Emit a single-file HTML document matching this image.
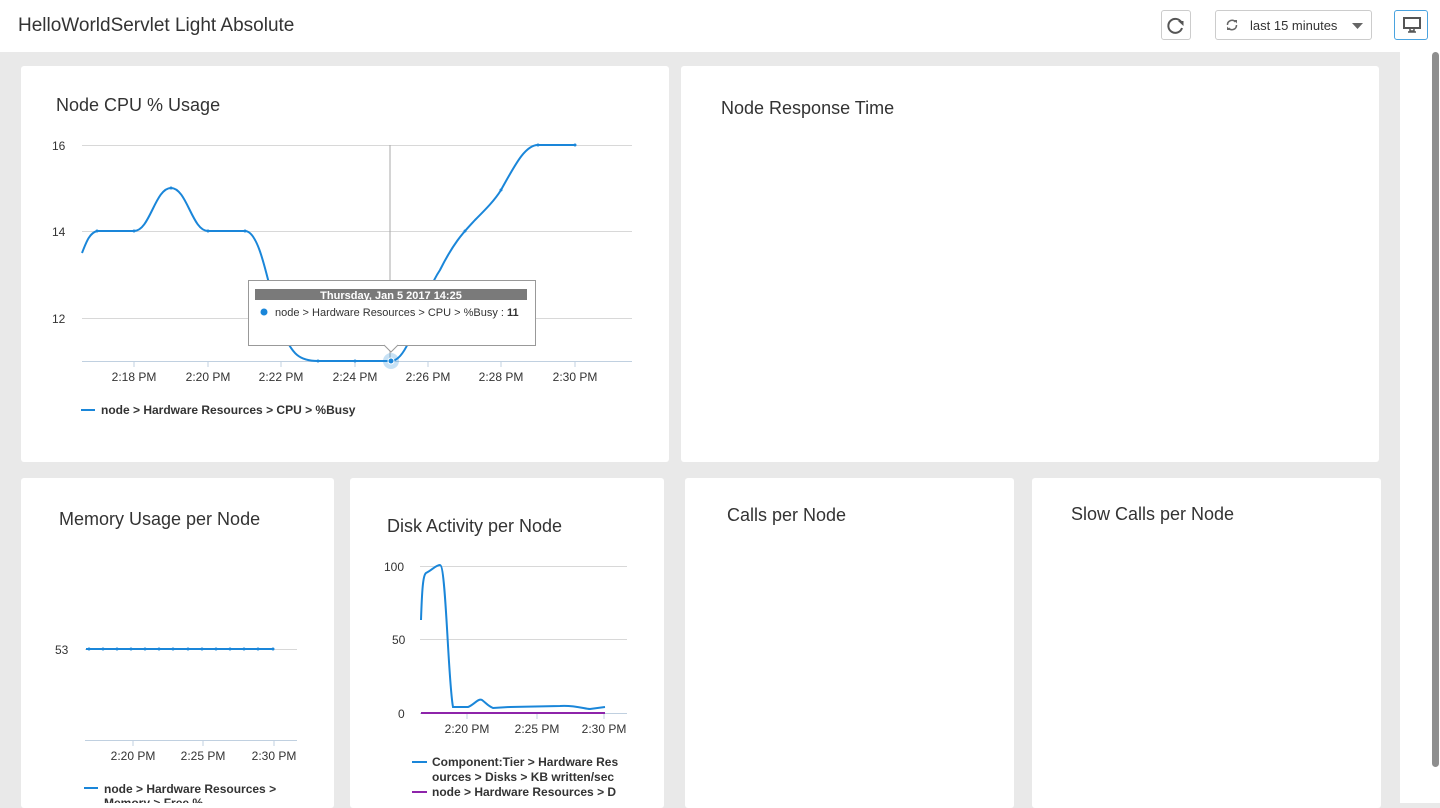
<!DOCTYPE html>
<html><head><meta charset="utf-8"><style>
body{margin:0;width:1440px;height:803px;overflow:hidden;background:#e9e9e9;font-family:"Liberation Sans",sans-serif;position:relative}
.hdr{position:absolute;left:0;top:0;width:1440px;height:52px;background:#fff}
.title{position:absolute;left:18px;top:15px;font-size:19px;color:#333}
.btn{position:absolute;border:1px solid #ccc;border-radius:3px;background:#fff;box-sizing:border-box}
.card{position:absolute;background:#fff;border-radius:3px}
.ct{position:absolute;font-size:18px;color:#333}
svg text{font-family:"Liberation Sans",sans-serif}
.sb{position:absolute;left:1400px;top:52px;width:40px;height:751px;background:#fff}
</style></head><body>
<div class="hdr">
<div class="title">HelloWorldServlet Light Absolute</div>
<div class="btn" style="left:1161px;top:10px;width:30px;height:30px">
<svg width="28" height="28" viewBox="0 0 28 28"><path d="M19.5 11.5 A7 7 0 1 0 20 17" fill="none" stroke="#555" stroke-width="2"/><path d="M16 10 L21.5 10 L21.5 15 Z" fill="#555"/></svg></div>
<div class="btn" style="left:1215px;top:10px;width:157px;height:30px">
<svg style="position:absolute;left:9px;top:7px" width="14" height="14" viewBox="0 0 14 14"><path d="M2.5 7 A4.5 4.5 0 0 1 10.5 4" fill="none" stroke="#666" stroke-width="1.5"/><path d="M11.5 7 A4.5 4.5 0 0 1 3.5 10" fill="none" stroke="#666" stroke-width="1.5"/><path d="M9 2 L12 2 L12 5.5Z M5 12 L2 12 L2 8.5Z" fill="#666"/></svg>
<span style="position:absolute;left:34px;top:7px;font-size:13px;color:#333">last 15 minutes</span>
<svg style="position:absolute;left:136px;top:12px" width="11" height="6"><path d="M0 0H11L5.5 6Z" fill="#666"/></svg></div>
<div class="btn" style="left:1394px;top:10px;width:34px;height:30px;border-color:#4aa3df">
<svg style="position:absolute;left:8px;top:6px" width="18" height="16" viewBox="0 0 18 16"><rect x="1" y="1" width="16" height="10" fill="none" stroke="#555" stroke-width="2"/><path d="M7 11v3h4v-3M5 15h8" stroke="#555" stroke-width="1.5" fill="none"/></svg></div>
</div>
<div class="sb"><div style="position:absolute;left:32px;top:0;width:7px;height:715px;background:#8e8e8e;border-radius:4px"></div></div>

<div class="card" style="left:21px;top:66px;width:648px;height:396px"></div>
<div class="card" style="left:681px;top:66px;width:698px;height:396px"></div>
<div class="card" style="left:21px;top:478px;width:313px;height:330px"></div>
<div class="card" style="left:350px;top:478px;width:314px;height:330px"></div>
<div class="card" style="left:685px;top:478px;width:329px;height:330px"></div>
<div class="card" style="left:1032px;top:478px;width:349px;height:330px"></div>

<div class="ct" style="left:56px;top:95px">Node CPU % Usage</div>
<div class="ct" style="left:721px;top:98px">Node Response Time</div>
<div class="ct" style="left:59px;top:509px">Memory Usage per Node</div>
<div class="ct" style="left:387px;top:516px">Disk Activity per Node</div>
<div class="ct" style="left:727px;top:505px">Calls per Node</div>
<div class="ct" style="left:1071px;top:504px">Slow Calls per Node</div>

<svg style="position:absolute;left:0;top:0" width="1440" height="803">
<g stroke="#d8d8d8" stroke-width="1">
<path d="M82 145.5H632M82 231.5H632M82 318.5H632"/>
<path d="M85 649.5H297M420 566.5H627M420 639.5H627"/>
</g>
<g stroke="#c0d0e0"><path d="M82 361.5H632M85 740.5H297M420 713.5H627"/>
<path d="M134 361v6M208 361v6M281 361v6M355 361v6M428 361v6M501 361v6M575 361v6M133 740v6M203 740v6M274 740v6M467 713v6M537 713v6M604 713v6"/></g>
<path d="M390 145V361" stroke="#aaa"/>
<g font-size="12" fill="#333">
<text x="52" y="150">16</text><text x="52" y="236">14</text><text x="52" y="323">12</text>
<g text-anchor="middle"><text x="134" y="381">2:18 PM</text><text x="208" y="381">2:20 PM</text><text x="281" y="381">2:22 PM</text><text x="355" y="381">2:24 PM</text><text x="428" y="381">2:26 PM</text><text x="501" y="381">2:28 PM</text><text x="575" y="381">2:30 PM</text>
<text x="133" y="760">2:20 PM</text><text x="203" y="760">2:25 PM</text><text x="274" y="760">2:30 PM</text>
<text x="467" y="733">2:20 PM</text><text x="537" y="733">2:25 PM</text><text x="604" y="733">2:30 PM</text></g>
<text x="55" y="654">53</text>
<text x="384" y="571">100</text><text x="392" y="644">50</text><text x="398" y="718">0</text>
</g>
<path d="M82 253C87 240 90 233 97 231L134 231C150 231 155 188 171 188C187 188 192 231 208 231L245 231C262 231 270 300 282 330C292 355 300 361 318 361L391 361C410 361 420 300 440 270C455 240 465 231 475 220C485 210 495 200 501 190C515 165 525 145 538 145L575 145" fill="none" stroke="#1a86d9" stroke-width="2"/>
<g fill="#1a86d9"><circle cx="97" cy="231" r="1.5"/><circle cx="134" cy="231" r="1.5"/><circle cx="171" cy="188" r="1.5"/><circle cx="208" cy="231" r="1.5"/><circle cx="245" cy="231" r="1.5"/><circle cx="318" cy="361" r="1.5"/><circle cx="355" cy="361" r="1.5"/><circle cx="465" cy="231" r="1.5"/><circle cx="501" cy="190" r="1.5"/><circle cx="538" cy="145" r="1.5"/><circle cx="575" cy="145" r="1.5"/></g>
<circle cx="391" cy="361" r="8" fill="#1a86d9" opacity="0.25"/><circle cx="391" cy="361" r="3" fill="#1a86d9" stroke="#fff"/>
<path d="M86 649H274" stroke="#1a86d9" stroke-width="2"/>
<g fill="#1a86d9"><circle cx="89" cy="649" r="1.5"/><circle cx="103" cy="649" r="1.5"/><circle cx="117" cy="649" r="1.5"/><circle cx="131" cy="649" r="1.5"/><circle cx="145" cy="649" r="1.5"/><circle cx="159" cy="649" r="1.5"/><circle cx="173" cy="649" r="1.5"/><circle cx="188" cy="649" r="1.5"/><circle cx="202" cy="649" r="1.5"/><circle cx="216" cy="649" r="1.5"/><circle cx="230" cy="649" r="1.5"/><circle cx="244" cy="649" r="1.5"/><circle cx="258" cy="649" r="1.5"/><circle cx="273" cy="649" r="1.5"/></g>
<path d="M421 620C422 590 423 575 426 573C432 570 436 565 440 565C446 565 448 680 453 707L468 707C474 705 478 698 482 700C486 703 488 706 493 708L510 707L560 706C575 705 585 709 590 709L605 707" fill="none" stroke="#1a86d9" stroke-width="2"/>
<path d="M421 713H605" stroke="#8e24aa" stroke-width="2"/>
<rect x="248.5" y="280.5" width="287" height="65" fill="#fff" stroke="#999"/>
<path d="M384 345L391 352L398 345" fill="#fff" stroke="#999"/>
<rect x="255" y="289" width="272" height="11" fill="#7a7a7a"/>
<text x="391" y="299" font-size="11" font-weight="bold" fill="#fff" text-anchor="middle">Thursday, Jan 5 2017 14:25</text>
<circle cx="264" cy="312" r="3.5" fill="#1a86d9"/>
<text x="275" y="316" font-size="11" fill="#333">node &gt; Hardware Resources &gt; CPU &gt; %Busy : <tspan font-weight="bold">11</tspan></text>
<g font-size="12" font-weight="bold" fill="#333">
<path d="M81 410H95M84 788H98M412 762H427" stroke="#1a86d9" stroke-width="2"/>
<path d="M412 792H427" stroke="#8e24aa" stroke-width="2"/>
<text x="101" y="414">node &gt; Hardware Resources &gt; CPU &gt; %Busy</text>
<text x="104" y="793">node &gt; Hardware Resources &gt;</text>
<text x="104" y="807">Memory &gt; Free %</text>
<text x="432" y="766">Component:Tier &gt; Hardware Res</text>
<text x="432" y="781">ources &gt; Disks &gt; KB written/sec</text>
<text x="432" y="796">node &gt; Hardware Resources &gt; D</text>
</g>
</svg>
</body></html>
